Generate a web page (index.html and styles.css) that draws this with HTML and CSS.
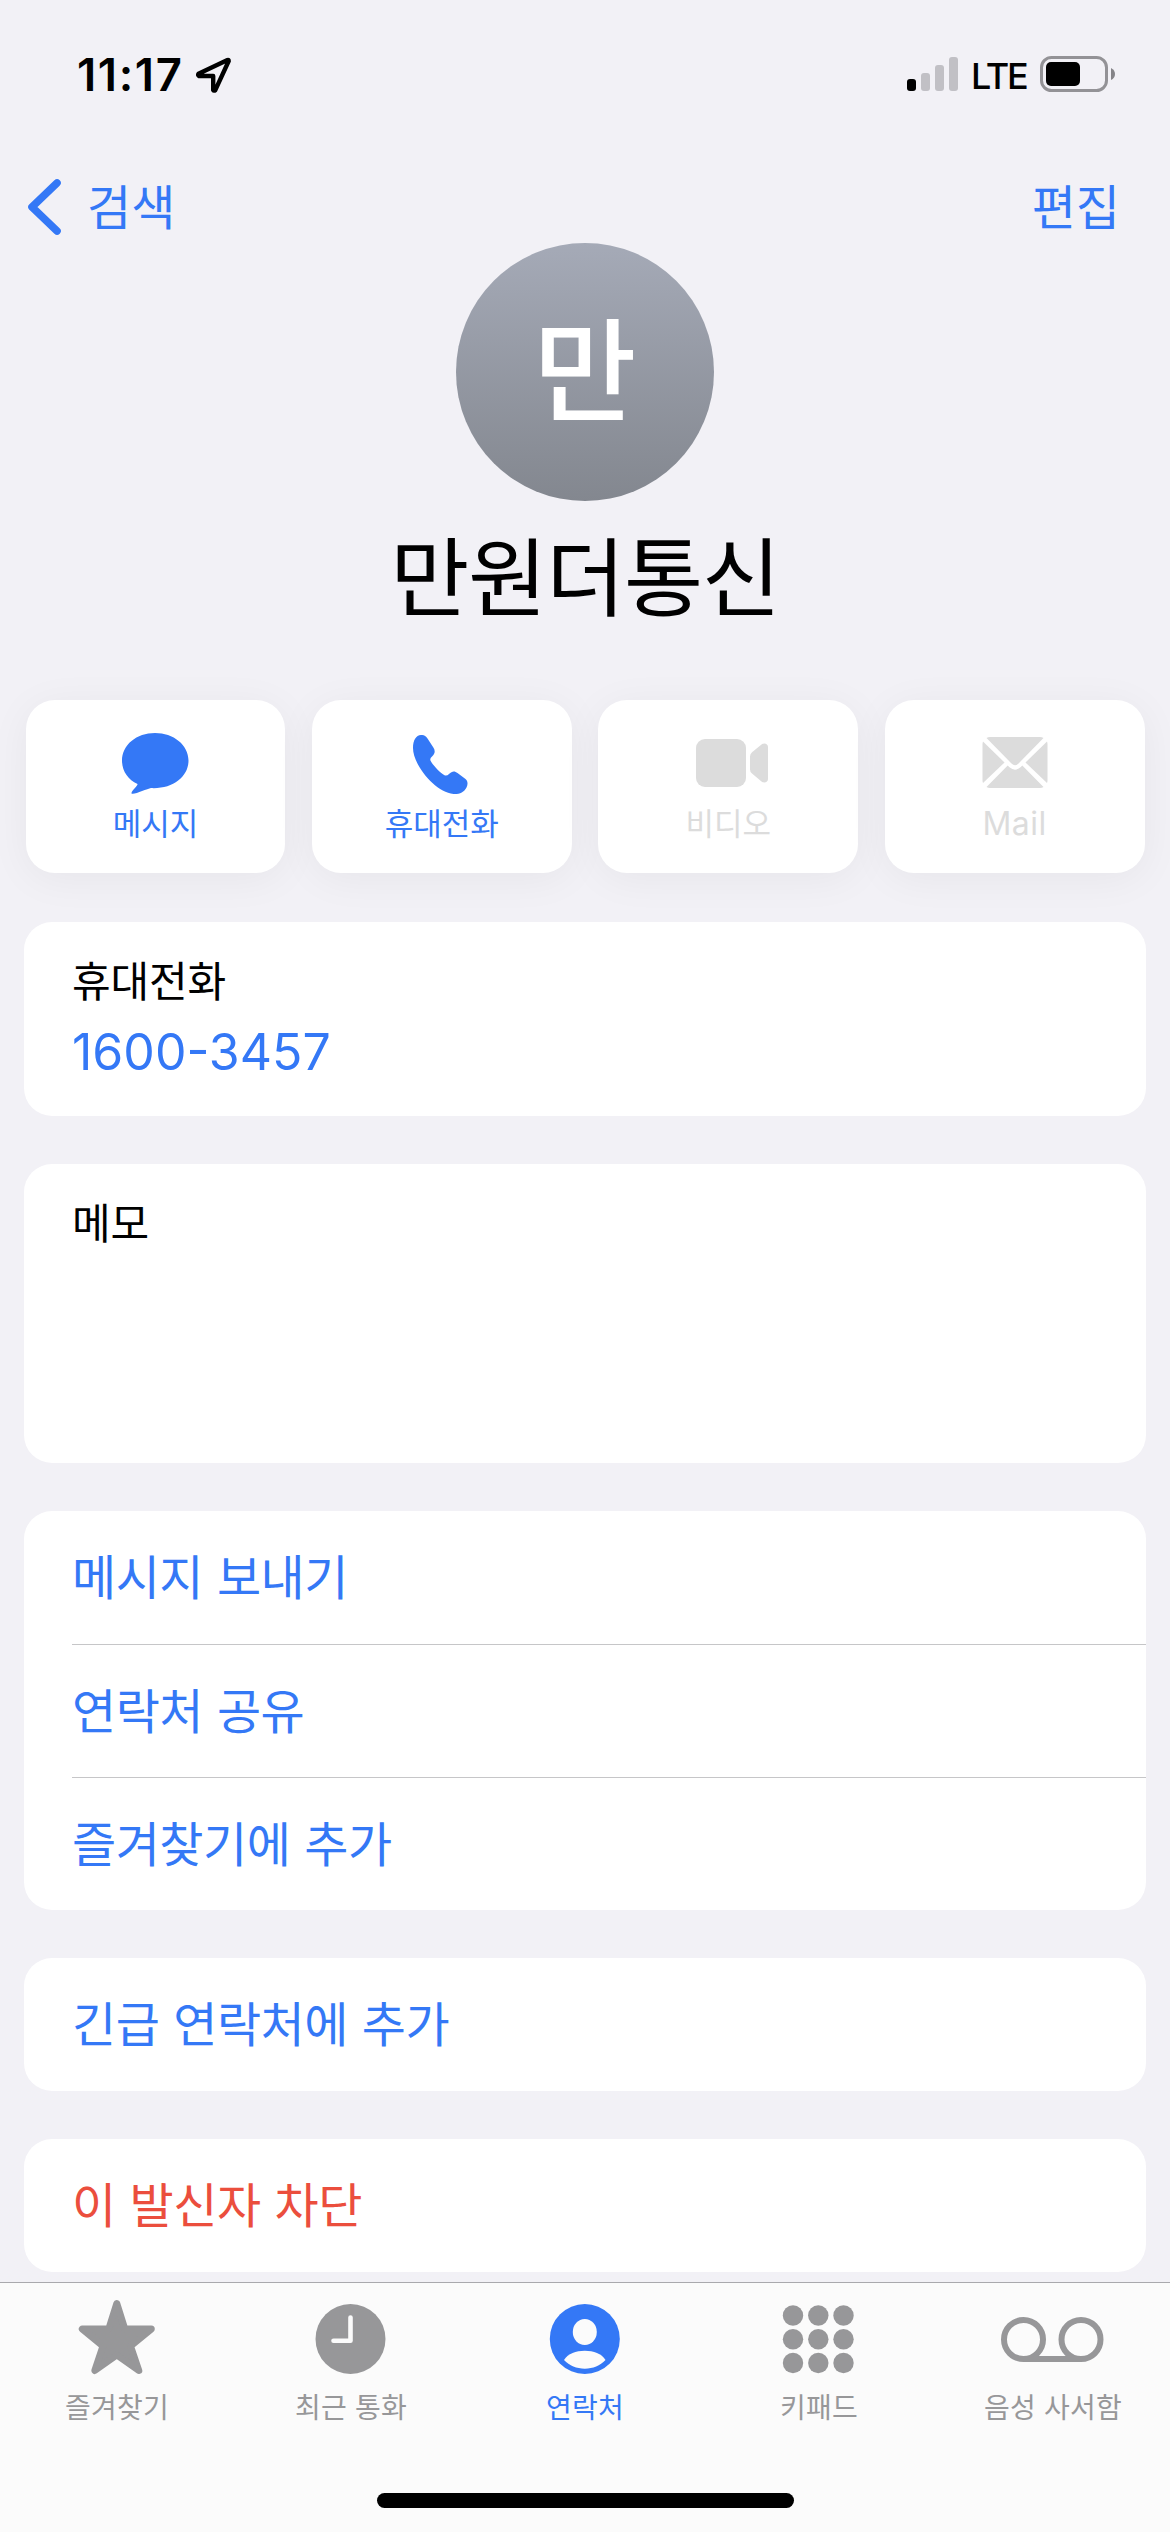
FILE: index.html
```html
<!DOCTYPE html>
<html lang="ko">
<head>
<meta charset="utf-8">
<title>만원더통신</title>
<link rel="stylesheet" href="styles.css">
</head>
<body>
<div class="screen">
  <header class="status">
    <div class="status-left">
      <span class="time">11:17</span>
      <svg class="location" width="38" height="38" viewBox="0 0 38 38"><path d="M33.5 4 L4.5 17.8 Q3.5 19.2 5 20 H19.2 V34 Q20 35.2 21.3 34.2 L34.7 5 Q34.8 3.5 33.5 4 Z" fill="none" stroke="#000" stroke-width="4.4" stroke-linejoin="round"/></svg>
    </div>
    <div class="status-right">
      <svg class="signal" width="51" height="34" viewBox="0 0 51 34">
        <rect x="0" y="22" width="9" height="12" rx="3"/>
        <g fill="#c1c0c5"><rect x="14" y="16" width="9" height="18" rx="3"/><rect x="28" y="8" width="9" height="26" rx="3"/><rect x="42" y="0" width="9" height="34" rx="3"/></g>
      </svg>
      <span class="network">LTE</span>
      <svg class="battery" width="75" height="36" viewBox="0 0 75 36">
        <rect x="1.5" y="1.5" width="65" height="33" rx="10" fill="none" stroke="#939296" stroke-width="3"/>
        <rect x="6" y="6" width="34" height="24" rx="5"/>
        <path d="M71 12 Q75 14 75 18 Q75 22 71 24 Z" fill="#858488"/>
      </svg>
    </div>
  </header>

  <nav class="nav">
    <a class="back">
      <svg width="36" height="58" viewBox="0 0 36 58"><path d="M30 5 L5 29 L30 53" fill="none" stroke="currentColor" stroke-width="7.600" stroke-linecap="round" stroke-linejoin="round"/></svg>
      <span>검색</span>
    </a>
    <a><span>편집</span></a>
  </nav>

  <section class="profile">
    <div class="avatar"><span>만</span></div>
    <h1 class="name">만원더통신</h1>
  </section>

  <section class="actions">
    <button class="action">
      <svg width="68" height="64" viewBox="0 0 68 64"><path d="M34 1 C15.500 1 1 13.800 1 30.700 C1 42 7 51 16.500 56 C17 58 10 63.500 10.500 66 C12 68.500 26 61 30 60.300 C52 61.500 67.500 48 67.500 30.700 C67.500 13.800 52.500 1 34 1 Z" transform="scale(1 .93)" fill="currentColor"/></svg>
      <span>메시지</span>
    </button>
    <button class="action">
      <svg class="shift-phone" width="56" height="64" viewBox="0 0 56 64"><path d="M1 18 C1 10 4 5.500 9 5 C12 4.600 13.800 5.800 15.500 8.500 L21.500 17.800 C23.500 21 22.800 23.500 20.500 26 C18.500 28 17.700 29 18.700 31 C21.500 36 28.500 43 32.500 45.200 C34 46 35.500 45.500 37 44 C40 41 42.500 40.500 45.500 43 L53.500 49 C56 51 56 54.500 54.500 57.500 C52 62.500 47.500 64.300 41.500 64 C23 62 1 35 1 18 Z" transform="translate(0 -2)" fill="currentColor"/></svg>
      <span>휴대전화</span>
    </button>
    <button class="action disabled">
      <svg class="shift-video" width="72" height="64" viewBox="0 0 72 64"><rect x="0" y="7" width="50" height="48" rx="9" fill="currentColor"/><path d="M54 24.500 Q54 22 56 20.300 L65.500 12.500 C68.500 10.500 72 12 72 15 V47 C72 50 68.500 51.800 65.500 49.500 L56 41.500 Q54 40 54 37.500 Z" fill="currentColor"/></svg>
      <span>비디오</span>
    </button>
    <button class="action disabled">
      <svg width="66" height="64" viewBox="0 0 66 64"><g fill="currentColor"><path d="M4.500 6 Q6 5 8 5 H58 Q60 5 61.500 6 L36.500 31.500 Q33 35 29.500 31.500 Z"/><path d="M1 9.500 L22.500 30.500 L1 51 Q.5 50 .5 48 V12 Q.5 11 1 9.500 Z"/><path d="M65 9.500 L43.500 30.500 L65 51 Q65.500 50 65.500 48 V12 Q65.500 11 65 9.500 Z"/><path d="M4.500 55 L25.700 33.500 L27.500 35.300 Q33 40 38.500 35.300 L40.300 33.500 L61.500 55 Q60 56 58 56 H8 Q6 56 4.500 55 Z"/></g></svg>
      <span class="latin">Mail</span>
    </button>
  </section>

  <main class="groups">
    <section class="card phone">
      <span class="label">휴대전화</span>
      <a class="number">1600-3457</a>
    </section>
    <section class="card memo"><span class="label">메모</span></section>
    <section class="card list">
      <a class="row">메시지 보내기</a>
      <a class="row">연락처 공유</a>
      <a class="row">즐겨찾기에 추가</a>
    </section>
    <section class="card list"><a class="row">긴급 연락처에 추가</a></section>
    <section class="card list"><a class="row danger">이 발신자 차단</a></section>
  </main>

  <footer class="tabbar">
    <div class="tabs">
      <a class="tab">
        <svg width="80" height="80" viewBox="0 0 80 80"><path d="M39.800 9 L47.800 34.500 L74.300 34.500 L53.500 51.500 L61.800 76 L39.800 60.500 L17.800 76 L26 51.500 L5.300 34.500 L31.800 34.500 Z" transform="translate(0 -1.500)" fill="currentColor" stroke="currentColor" stroke-width="7" stroke-linejoin="round"/></svg>
        <span>즐겨찾기</span>
      </a>
      <a class="tab">
        <svg width="80" height="80" viewBox="0 0 80 80"><circle cx="39.500" cy="43" r="35" fill="currentColor"/><path d="M39.500 21.500 V44.700 H22.500" fill="none" stroke="#fbfbfb" stroke-width="4.600" stroke-linecap="round" stroke-linejoin="round"/></svg>
        <span>최근 통화</span>
      </a>
      <a class="tab active">
        <svg width="80" height="80" viewBox="0 0 80 80"><circle cx="39.800" cy="43" r="35" fill="currentColor"/><g fill="#fbfbfb"><ellipse cx="39.800" cy="36" rx="12" ry="13"/><path d="M19 64 C23 57.500 31 54.700 39.800 54.700 C48.600 54.700 56.500 57.500 60.500 64 C55 69.500 48 72.700 39.800 72.700 C31.500 72.700 24.500 69.500 19 64 Z"/></g></svg>
        <span>연락처</span>
      </a>
      <a class="tab">
        <svg width="80" height="80" viewBox="0 0 80 80"><g fill="currentColor"><circle cx="14" cy="19.500" r="10.200"/><circle cx="39.300" cy="19.500" r="10.200"/><circle cx="64.500" cy="19.500" r="10.200"/><circle cx="14" cy="43.200" r="10.200"/><circle cx="39.300" cy="43.200" r="10.200"/><circle cx="64.500" cy="43.200" r="10.200"/><circle cx="14" cy="67" r="10.200"/><circle cx="39.300" cy="67" r="10.200"/><circle cx="64.500" cy="67" r="10.200"/></g></svg>
        <span>키패드</span>
      </a>
      <a class="tab">
        <svg width="106" height="80" viewBox="0 0 106 80"><g fill="none" stroke="currentColor" stroke-width="6"><circle cx="23.500" cy="43.500" r="19.500"/><circle cx="81" cy="43.500" r="19.500"/><path d="M23.500 63 H81"/></g></svg>
        <span>음성 사서함</span>
      </a>
    </div>
    <div class="home"></div>
  </footer>
</div>
</body>
</html>
```
FILE: styles.css
```css
* { box-sizing: border-box; margin: 0; padding: 0; }

body {
  background: #f2f1f6;
  color: #000;
  font-family: "Noto Sans CJK KR", sans-serif;
}

svg { display: block; flex: none; }
a { color: #3478f6; }

.screen {
  width: 1170px;
  height: 2532px;
  display: flex;
  flex-direction: column;
  overflow: hidden;
}

/* Status bar */
.status {
  height: 141px;
  flex: none;
  display: flex;
  justify-content: space-between;
  padding: 0 55px 0 77px;
  font-family: Inter, sans-serif;
}
.status-left, .status-right { display: flex; align-items: flex-start; }
.time { font-size: 45.500px; font-weight: 600; line-height: 50px; margin-top: 50px; width: 117px; letter-spacing: 1.600px; white-space: nowrap; }
.location { margin-top: 56px; }
.signal { margin-top: 57px; }
.network { font-size: 36px; font-weight: 500; line-height: 40px; margin: 56px 0 0 13px; width: 69px; letter-spacing: -2.200px; white-space: nowrap; }
.battery { margin-top: 56px; }

/* Navigation bar */
.nav {
  height: 102px;
  flex: none;
  display: flex;
  justify-content: space-between;
  align-items: center;
  padding: 0 50px 0 27px;
  font-size: 48px;
  line-height: 60px;
}
.nav a { display: flex; align-items: center; padding-top: 29px; }
.nav span { padding-bottom: 6px; }
.back svg { margin-right: 24px; }

/* Contact header */
.profile { flex: none; display: flex; flex-direction: column; align-items: center; height: 457px; }
.avatar {
  width: 258px;
  height: 258px;
  border-radius: 50%;
  background: linear-gradient(#a5aab7, #83878f);
  color: #fff;
  display: flex;
  align-items: center;
  justify-content: center;
  font-size: 112px;
  font-weight: 500;
  line-height: 120px;
  padding-bottom: 16px;
}
.name { font-size: 86px; font-weight: 400; line-height: 100px; margin-top: 22px; letter-spacing: -1.200px; }

/* Quick actions */
.actions { flex: none; display: grid; grid-template-columns: repeat(4, 1fr); gap: 26.500px; padding: 0 25.500px; height: 172.500px; margin-bottom: 49.500px; }
.action {
  border: 0;
  border-radius: 29px;
  background: #fff;
  box-shadow: 0 6px 42px rgba(0, 0, 0, .05);
  color: #3478f6;
  font: 31px/40px "Noto Sans CJK KR", sans-serif;
  display: flex;
  flex-direction: column;
  align-items: center;
  padding-top: 32px;
}
.action svg { margin-bottom: 6px; }
.action .latin { font-family: Inter, sans-serif; font-size: 32px; letter-spacing: .4px; padding-top: 2px; }
.action.disabled { color: #dcdcdc; }
.shift-video { margin-left: 7px; }
.shift-phone { margin-right: 3px; }

/* Grouped cards */
.groups { display: flex; flex-direction: column; gap: 48px; padding: 0 24px; flex: none; }
.card { background: #fff; border-radius: 28px; overflow: hidden; position: relative; }
.card.phone, .card.memo { padding: 32px 48px 0; display: flex; flex-direction: column; }
.card.phone { height: 194px; }
.card.memo { height: 299px; }
.label { font-size: 42px; line-height: 50px; letter-spacing: -.1px; }
.number { font-family: Inter, sans-serif; font-size: 50px; line-height: 60px; margin-top: 18px; }
.row {
  display: block;
  height: 133px;
  margin-left: 48px;
  font-size: 48px;
  line-height: 126px;
  letter-spacing: -.5px;
  word-spacing: 1px;
}
.row + .row { border-top: 1px solid #c6c6c8; }
.row.danger { color: #eb4e3d; }

/* Tab bar */
.tabbar {
  margin-top: auto;
  flex: none;
  height: 250px;
  background: #fbfbfb;
  border-top: 1px solid #a9a9ad;
  display: flex;
  flex-direction: column;
  align-items: center;
  justify-content: space-between;
  padding-bottom: 24px;
}
.tabs { display: grid; grid-template-columns: repeat(5, 1fr); width: 100%; padding-top: 13px; }
.tab { display: flex; flex-direction: column; align-items: center; color: #979799; font-size: 28px; line-height: 36px; letter-spacing: .2px; }
.tab svg { margin-bottom: 12px; }
.tab.active { color: #3478f6; }
.home { width: 417px; height: 15px; border-radius: 8px; background: #000; }
```
